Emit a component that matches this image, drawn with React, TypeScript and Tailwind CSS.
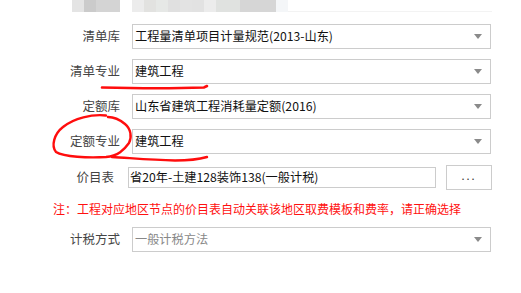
import React from 'react';

const font = { fontFamily: '"Noto Sans CJK SC", "Microsoft YaHei", sans-serif' };

// Blurred mosaic at the top of the screenshot (a partly hidden field)
const mosaicLeft = ['#e4e4e4', '#cbcbcb', '#d4d4d4', '#d4d4d4'];
const mosaicRight = ['#ececec', '#e2e2e0', '#e6e8e6', '#e0e0e0', '#e3e3e3', '#e2e2e2', '#ececec', '#e0e2e0', '#e0e2e0', '#d6d6d6', '#d6d6d6', '#d6d6d6', '#f4f6f8'];

const Caret = () => (
  <svg width="8" height="5" viewBox="0 0 8 5" className="shrink-0">
    <polygon points="0,0 8,0 4,5" fill="#8a8a8a" />
  </svg>
);

const SelectRow: React.FC<{ label: string; value: string; placeholder?: boolean }> = ({ label, value, placeholder }) => (
  <div className="flex items-center gap-[12px]">
    <div className="w-[120px] text-right text-[12.5px] text-[#444]">{label}</div>
    <div className="flex h-[25px] w-[359px] items-center justify-between border border-[#cccccc] bg-white pl-[2px] pr-[8px]">
      <span className={placeholder ? 'text-[12.2px] text-[#888]' : 'text-[12.2px] text-[#111]'}>{value}</span>
      <Caret />
    </div>
  </div>
);

export default function App() {
  return (
    <div className="relative h-[293px] w-[521px] overflow-hidden bg-white" style={font}>
      <div className="flex h-[12px]">
        <div className="ml-[72px] flex">
          {mosaicLeft.map((c, i) => (
            <div key={i} className="h-[12px] w-[12px]" style={{ background: c }} />
          ))}
        </div>
        <div className="ml-[12px] flex w-[360px] border-b border-[#f3f3f3]">
          {mosaicRight.map((c, i) => (
            <div key={i} className="h-[12px] w-[12px]" style={{ background: c }} />
          ))}
        </div>
      </div>

      <div className="flex flex-col pt-[12px]">
        <div className="flex flex-col gap-[10px]">
          <SelectRow label="清单库" value="工程量清单项目计量规范(2013-山东)" />
          <SelectRow label="清单专业" value="建筑工程" />
          <SelectRow label="定额库" value="山东省建筑工程消耗量定额(2016)" />
          <SelectRow label="定额专业" value="建筑工程" />
        </div>

        <div className="mt-[11px] flex h-[25px] items-center">
          <div className="w-[114px] text-right text-[12.5px] text-[#444]">价目表</div>
          <div className="ml-[14px] flex h-[21px] w-[308px] items-center border border-[#cccccc] pl-[1px] text-[12.2px] text-[#111]">
            省20年-土建128装饰138(一般计税)
          </div>
          <button className="ml-[10px] flex h-[25px] w-[46px] items-center justify-center border border-[#cccccc] bg-white pb-[4px] text-[11px] tracking-[2px] text-[#333]">
            ...
          </button>
        </div>

        <div className="mt-[10px] h-[18px] pl-[53px] text-[12px] leading-[18px] text-[#ff1010]">
          注：工程对应地区节点的价目表自动关联该地区取费模板和费率，请正确选择
        </div>

        <div className="mt-[9px]">
          <SelectRow label="计税方式" value="一般计税方法" placeholder />
        </div>
      </div>

      {/* hand-drawn red marks over the form */}
      <svg className="pointer-events-none absolute left-0 top-0" width="521" height="293" viewBox="0 0 521 293">
        <path d="M102 87.5 C140 88.5, 175 88.5, 204 87.5 L207 86" stroke="#ff0d0d" strokeWidth="2.6" fill="none" strokeLinecap="round" />
        <path
          d="M106 115.5 C92 114, 74 118, 63 127 C54 134, 51 146, 56 152 C64 157, 88 158, 106 157 C118 156, 124 150, 129 143 C132 137, 131 129, 125 124 C119 119, 112 117, 108 117"
          stroke="#ff0d0d"
          strokeWidth="2.4"
          fill="none"
          strokeLinecap="round"
        />
        <path d="M112 157 C130 158, 150 160, 175 160.5 C190 160.5, 200 159, 207 157" stroke="#ff0d0d" strokeWidth="2.4" fill="none" strokeLinecap="round" />
      </svg>
    </div>
  );
}
